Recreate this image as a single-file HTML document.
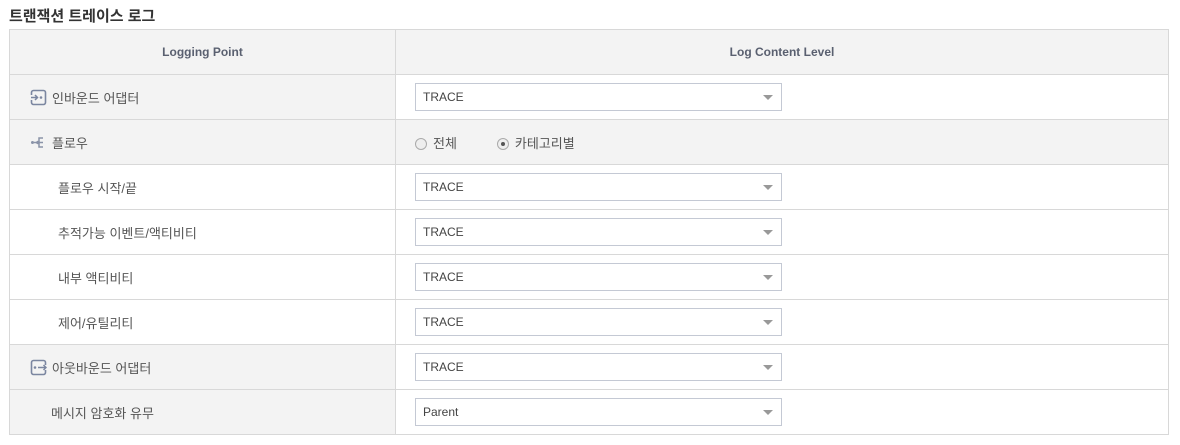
<!DOCTYPE html>
<html><head><meta charset="utf-8"><style>
*{box-sizing:border-box;margin:0;padding:0}
body{width:1180px;height:445px;background:#fff;font-family:"Liberation Sans","Noto Sans CJK KR",sans-serif;font-size:12px;color:#555;position:relative;overflow:hidden}
.title{position:absolute;left:9px;top:5px;font-size:15px;color:#333;font-weight:bold}
.tbl{position:absolute;left:9px;top:29px;width:1160px;border:1px solid #d8d8d8;border-bottom:none}
.row{display:flex;height:45px;border-bottom:1px solid #d8d8d8}
.l{width:386px;border-right:1px solid #d8d8d8;display:flex;align-items:center;background:#f3f3f3;font-size:13px}
.r{flex:1;display:flex;align-items:center;padding-left:19px}
.hd .l,.hd .r{justify-content:center;padding:0;background:#f3f3f3;color:#5a6070;font-weight:bold;font-size:12px}
.sel{width:367px;height:28px;border:1px solid #c4c9d4;background:#fff;display:flex;align-items:center;padding-left:7px;position:relative;color:#444;font-size:12px}
.sel:after{content:"";position:absolute;right:8px;top:11px;border-left:5px solid transparent;border-right:5px solid transparent;border-top:5px solid #999}
.w .l{background:#fff}
.ic{margin-left:20px;margin-right:5px;width:17px;height:17px}
.rad{display:inline-block;width:12px;height:12px;border-radius:50%;border:1px solid #aaa;background:#eee;margin-right:6px;vertical-align:-2px;position:relative}
.rad.on:after{content:"";position:absolute;left:3px;top:3px;width:4px;height:4px;border-radius:50%;background:#555}
.rl{font-size:13px}
</style></head><body>
<div class="title">트랜잭션 트레이스 로그</div>
<div class="tbl">
<div class="row hd"><div class="l">Logging Point</div><div class="r">Log Content Level</div></div>
<div class="row"><div class="l"><svg class="ic" viewBox="0 0 17 17"><rect x="1.5" y="1.5" width="14" height="14" rx="2" fill="none" stroke="#7b86a0" stroke-width="1.6"/><rect x="0" y="6" width="3" height="5" fill="#f3f3f3"/><path d="M1 8.5h6M5 6l2.5 2.5L5 11" stroke="#7b86a0" stroke-width="1.5" fill="none"/><circle cx="11" cy="8.5" r="1.3" fill="#7b86a0"/></svg>인바운드 어댑터</div><div class="r" style="background:#fff"><div class="sel">TRACE</div></div></div>
<div class="row"><div class="l"><svg class="ic" viewBox="0 0 17 17"><circle cx="2.5" cy="8.5" r="1.5" fill="#8a93a8"/><path d="M4 8.5h5M9 8.5V4h4M9 8.5v4.5h4M9 8.5h4" stroke="#8a93a8" stroke-width="1.5" fill="none"/><circle cx="8" cy="8.5" r="1.8" fill="#8a93a8"/></svg>플로우</div><div class="r rl" style="background:#f3f3f3"><span><span class="rad"></span>전체</span><span style="margin-left:40px"><span class="rad on"></span>카테고리별</span></div></div>
<div class="row w"><div class="l" style="padding-left:48px">플로우 시작/끝</div><div class="r"><div class="sel">TRACE</div></div></div>
<div class="row w"><div class="l" style="padding-left:48px">추적가능 이벤트/액티비티</div><div class="r"><div class="sel">TRACE</div></div></div>
<div class="row w"><div class="l" style="padding-left:48px">내부 액티비티</div><div class="r"><div class="sel">TRACE</div></div></div>
<div class="row w"><div class="l" style="padding-left:48px">제어/유틸리티</div><div class="r"><div class="sel">TRACE</div></div></div>
<div class="row"><div class="l"><svg class="ic" viewBox="0 0 17 17"><rect x="1.5" y="1.5" width="14" height="14" rx="2" fill="none" stroke="#7b86a0" stroke-width="1.6"/><rect x="14" y="6" width="3" height="5" fill="#f3f3f3"/><circle cx="5" cy="8.5" r="1.3" fill="#7b86a0"/><path d="M8 8.5h8M13.5 6L16 8.5 13.5 11" stroke="#7b86a0" stroke-width="1.5" fill="none"/></svg>아웃바운드 어댑터</div><div class="r"><div class="sel">TRACE</div></div></div>
<div class="row"><div class="l" style="padding-left:41px">메시지 암호화 유무</div><div class="r"><div class="sel">Parent</div></div></div>
</div>
</body></html>
